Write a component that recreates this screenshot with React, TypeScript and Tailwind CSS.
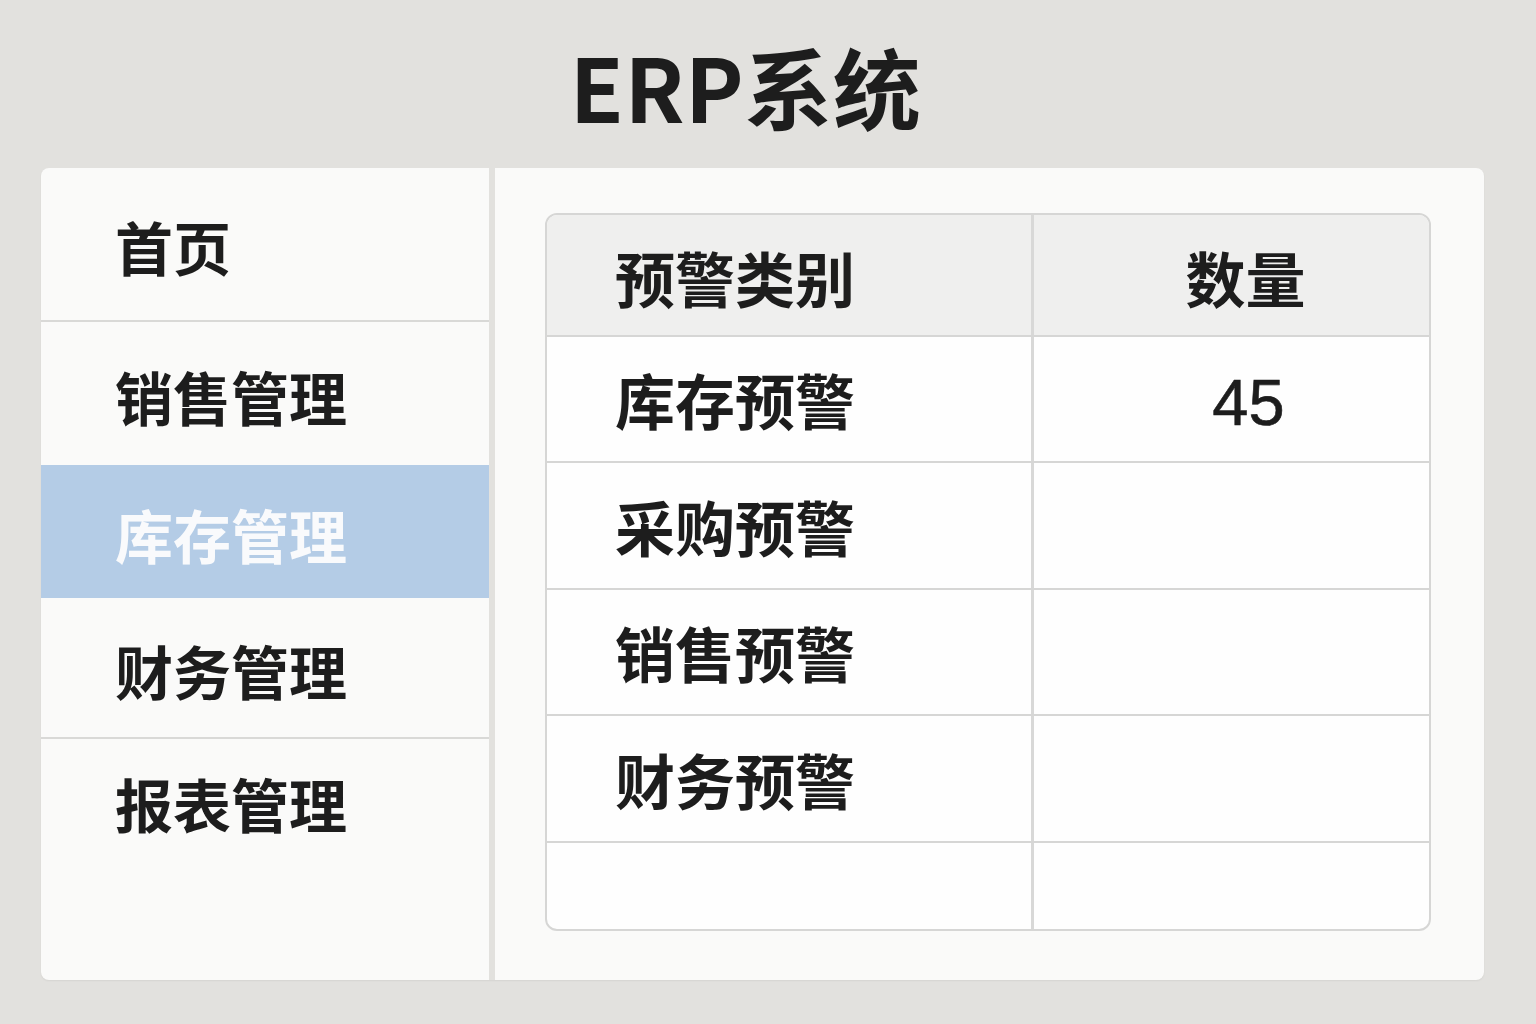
import React from 'react';

const font = { fontFamily: '"Noto Sans CJK SC", "Noto Sans", sans-serif' };

const menu = [
  { label: '首页', h: 'h-[154px]', active: false, divider: true },
  { label: '销售管理', h: 'h-[143px]', active: false, divider: false },
  { label: '库存管理', h: 'h-[133px]', active: true, divider: false },
  { label: '财务管理', h: 'h-[141px]', active: false, divider: true },
  { label: '报表管理', h: 'h-[124px]', active: false, divider: false },
];

const rows = [
  { name: '库存预警', count: '45', h: 'h-[126px]' },
  { name: '采购预警', count: '', h: 'h-[127px]' },
  { name: '销售预警', count: '', h: 'h-[126px]' },
  { name: '财务预警', count: '', h: 'h-[127px]' },
  { name: '', count: '', h: 'h-[86px]' },
];

export default function App() {
  return (
    <div className="w-[1536px] h-[1024px] bg-[#e2e1de] flex flex-col pl-[41px] text-[#1d1d1d]" style={font}>
      <div className="h-[168px] w-[1443px] flex items-center justify-center pt-[2px] pr-[34px]">
        <h1 className="text-[88px] font-bold leading-none tracking-[0.5px]">ERP系统</h1>
      </div>

      <div className="w-[1443px] h-[812px] bg-[#fafaf9] rounded-[8px] flex overflow-hidden shadow-[0_1px_2px_rgba(0,0,0,0.06)]">
        {/* sidebar */}
        <div className="w-[454px] shrink-0 border-r-[6px] border-[#e2e1de] flex flex-col">
          {menu.map((m) => (
            <div
              key={m.label}
              className={`${m.h} shrink-0 flex items-center pl-[74px] pt-[4px] text-[58px] font-bold leading-none ${
                m.active ? 'bg-[#b4cce6] text-[#f9fafc]' : ''
              } ${m.divider ? 'border-b-2 border-[#d9d9d7]' : ''}`}
            >
              {m.label}
            </div>
          ))}
        </div>

        {/* main */}
        <div className="flex-1 pt-[45px] pl-[50px] pr-[53px]">
          <div className="rounded-[12px] border-2 border-[#d6d6d5] overflow-hidden bg-[#fefefe]">
            <div className="h-[122px] flex bg-[#efefee] border-b-2 border-[#d6d6d5]">
              <div className="w-[487px] shrink-0 border-r-[3px] border-[#d8d8d7] flex items-center pl-[68px] pt-[4px] text-[60px] font-bold leading-none">
                预警类别
              </div>
              <div className="flex-1 flex items-center justify-center pl-[28px] pt-[4px] text-[60px] font-bold leading-none">
                数量
              </div>
            </div>
            {rows.map((r, i) => (
              <div
                key={i}
                className={`${r.h} flex ${i < rows.length - 1 ? 'border-b-2 border-[#d6d6d5]' : ''}`}
              >
                <div className="w-[487px] shrink-0 border-r-[3px] border-[#d8d8d7] flex items-center pl-[68px] text-[60px] font-bold leading-none">
                  {r.name}
                </div>
                <div
                  className="flex-1 flex items-center justify-center pl-[34px] pt-[6px] text-[65px] leading-none [-webkit-text-stroke:0.6px_#1d1d1d]"
                  style={{ fontFamily: '"Liberation Sans", Arial, sans-serif' }}
                >
                  {r.count}
                </div>
              </div>
            ))}
          </div>
        </div>
      </div>
    </div>
  );
}
